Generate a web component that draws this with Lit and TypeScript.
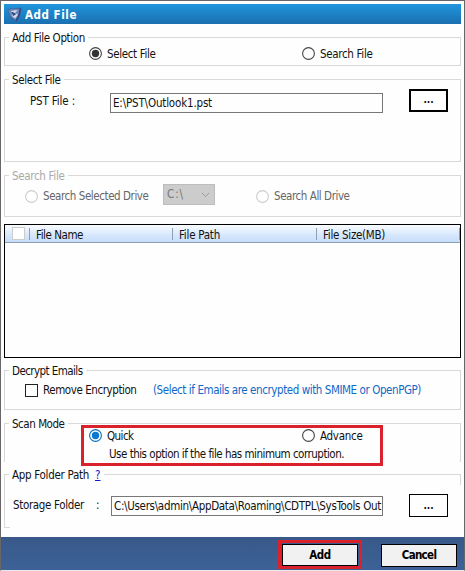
import { LitElement, css, html, svg } from "lit"
import { customElement, property, query } from "lit/decorators.js"
import { classMap } from "lit/directives/class-map.js"

// label that spreads its letters over a given width
@customElement("fit-label")
export class FitLabel extends LitElement {
  @property()
  text = ""

  @property({ type: Number })
  size = 0

  @query("span")
  span!: HTMLSpanElement

  updated() {
    if (!this.size) return
    this.span.style.letterSpacing = "0px"
    const natural = this.span.getBoundingClientRect().width
    this.span.style.letterSpacing = (this.size - natural) / this.text.length + "px"
  }

  render() {
    return html`<span>${this.text}</span>`
  }

  static styles = css`
    :host {
      display: block;
      white-space: pre;
    }
    span {
      display: inline-block;
    }
  `
}

@customElement("radio-item")
export class RadioItem extends LitElement {
  @property()
  label = ""

  @property({ type: Number })
  size = 0

  @property({ type: Boolean })
  checked = false

  @property({ type: Boolean })
  accent = false

  @property({ type: Boolean })
  disabled = false

  render() {
    return html`
      <div class=${classMap({ radio: true, accent: this.accent, disabled: this.disabled })}>
        <svg width="13" height="13" viewBox="0 0 13 13">
          <circle class="ring" cx="6.5" cy="6.5" r="5.9" />
          ${this.checked ? svg`<circle class="dot" cx="6.5" cy="6.5" r="3.7" />` : null}
        </svg>
        <fit-label .text=${this.label} .size=${this.size}></fit-label>
      </div>
    `
  }

  static styles = css`
    :host {
      display: block;
    }
    .radio {
      display: flex;
      align-items: center;
      gap: 5px;
      height: 15px;
    }
    svg {
      display: block;
      flex: none;
    }
    fit-label {
      padding-top: 1px;
    }
    .ring {
      fill: #fff;
      stroke: #444;
      stroke-width: 1.1;
    }
    .dot {
      fill: #333;
    }
    .accent .ring {
      stroke: #0a6cb8;
    }
    .accent .dot {
      fill: #0a78d0;
    }
    .disabled .ring {
      stroke: #ccc;
    }
    .disabled {
      color: #666;
    }
  `
}

@customElement("app-root")
export class AppRoot extends LitElement {
  columns = [
    { name: "File Name", size: 47, cls: "c1" },
    { name: "File Path", size: 41, cls: "c2" },
    { name: "File Size(MB)", size: 62, cls: "c3" },
  ]

  legend(text: string, size: number) {
    return html`<div class="legend"><fit-label .text=${text} .size=${size}></fit-label></div>`
  }

  render() {
    return html`
      <div class="window">
        <div class="title">
          <svg width="16" height="17" viewBox="0 0 16 17">
            <path d="M0.5 3 L7 2 L14.5 1.5 L13.5 9 L9 16.5 L3 12 Z" fill="#3a6aa6" />
            <path d="M1.5 4 L7 3 L12.5 3 L11.5 9 L8.5 14 L3.5 10 Z" fill="#7088ba" />
            <path d="M4 5 L10.5 4 L8 7 L11 8.5 L8 12.5 L4.5 9.5 L7.5 9 Z" fill="#d3dcec" />
            <path d="M5 6.5 L8 8 L6 9.5 M13.5 2.5 L12 9.5 L9 15" fill="none" stroke="#33467a" stroke-width="1.4" />
          </svg>
          <fit-label .text=${"Add File"} .size=${52}></fit-label>
        </div>

        <div class="group option">
          ${this.legend("Add File Option", 73)}
          <div class="radios">
            <radio-item label="Select File" size="48.5" checked></radio-item>
            <radio-item label="Search File" size="52.5"></radio-item>
          </div>
        </div>

        <div class="group select">
          ${this.legend("Select File", 48.5)}
          <div class="row">
            <fit-label class="name" .text=${"PST File :"} .size=${45}></fit-label>
            <div class="input"><fit-label .text=${"E:\\PST\\Outlook1.pst"} .size=${99}></fit-label></div>
            <div class="browse focus"><fit-label .text=${"..."} .size=${10}></fit-label></div>
          </div>
        </div>

        <div class="group search">
          ${this.legend("Search File", 52.5)}
          <div class="row">
            <radio-item label="Search Selected Drive" size="105.5" disabled></radio-item>
            <div class="combo">
              <fit-label .text=${"C:\\"} .size=${17}></fit-label>
              <svg width="9" height="6" viewBox="0 0 9 6">
                <path d="M1 1 L4.5 4.5 L8 1" fill="none" stroke="#999" />
              </svg>
            </div>
            <radio-item label="Search All Drive" size="75.5" disabled></radio-item>
          </div>
        </div>

        <div class="table">
          <div class="head">
            <div class="cell check"><i></i></div>
            ${this.columns.map(
              (c) => html`<div class="cell ${c.cls}"><fit-label .text=${c.name} .size=${c.size}></fit-label></div>`
            )}
          </div>
        </div>

        <div class="group decrypt">
          ${this.legend("Decrypt Emails", 70.5)}
          <div class="row">
            <div class="box"></div>
            <fit-label class="remove" .text=${"Remove Encryption"} .size=${93.5}></fit-label>
            <fit-label class="note" .text=${"(Select if Emails are encrypted with SMIME or OpenPGP)"} .size=${268}></fit-label>
          </div>
        </div>

        <div class="group scan">
          ${this.legend("Scan Mode", 52.5)}
          <div class="mark">
            <div class="modes">
              <radio-item label="Quick" size="26.5" checked accent></radio-item>
              <radio-item label="Advance" size="42.5"></radio-item>
            </div>
            <fit-label class="hint" .text=${"Use this option if the file has minimum corruption."} .size=${235}></fit-label>
          </div>
        </div>

        <div class="group folder">
          <div class="legend">
            <fit-label .text=${"App Folder Path"} .size=${77}></fit-label>
            <span class="help">?</span>
          </div>
          <div class="row">
            <fit-label class="name" .text=${"Storage Folder"} .size=${71}></fit-label>
            <span class="colon">:</span>
            <div class="input"><fit-label .text=${"C:\\Users\\admin\\AppData\\Roaming\\CDTPL\\SysTools Out"} .size=${267}></fit-label></div>
            <div class="browse"><fit-label .text=${"..."} .size=${10}></fit-label></div>
          </div>
        </div>

        <div class="footer">
          <div class="ring"><div class="button"><fit-label .text=${"Add"} .size=${21.5}></fit-label></div></div>
          <div class="button"><fit-label .text=${"Cancel"} .size=${34.5}></fit-label></div>
        </div>
      </div>
    `
  }

  static styles = css`
    :host {
      display: block;
      font: 11.5px/15px "DejaVu Sans Condensed", "DejaVu Sans", Tahoma, sans-serif;
      font-stretch: condensed;
      color: #111;
    }
    * {
      box-sizing: border-box;
    }
    .window {
      width: 465px;
      height: 571px;
      display: flex;
      flex-direction: column;
      background: #fefefe;
      border: 1px solid #6a6668;
      border-bottom-color: #e8e8e8;
      overflow: hidden;
    }
    .title {
      flex: none;
      height: 20px;
      margin: 3px 3px 0;
      padding-left: 3px;
      display: flex;
      align-items: center;
      gap: 2px;
      color: #fff;
      font-weight: bold;
      font-size: 11.5px;
      background: linear-gradient(#2096dd, #1a6fb0);
    }
    .title fit-label {
      padding-top: 2px;
    }
    .group {
      flex: none;
      margin: 0 3px;
      border: 1px solid #d9d9d9;
    }
    .legend {
      display: flex;
      width: fit-content;
      height: 15px;
      margin: -8px 0 0 4px;
      padding: 0 3px;
      background: #fefefe;
    }
    .legend > * {
      padding-top: 1px;
    }
    .row {
      display: flex;
      align-items: center;
    }
    .option {
      height: 29px;
      margin-top: 13px;
    }
    .radios {
      display: grid;
      grid-template-columns: 213px auto;
      padding-left: 84px;
      margin-top: 1px;
    }
    .select {
      height: 83px;
      margin-top: 13px;
    }
    .select .row {
      padding-left: 25px;
    }
    .select .name {
      width: 80px;
      padding-top: 3px;
    }
    .input {
      width: 273px;
      height: 20px;
      padding: 1px 0 0 2px;
      border: 1px solid #777;
      line-height: 17px;
      overflow: hidden;
    }
    .select .input {
      margin-top: 6px;
    }
    .browse {
      display: flex;
      justify-content: center;
      width: 39px;
      height: 23px;
      margin-left: 26px;
      border: 1px solid #000;
      line-height: 20px;
      font-size: 10px;
      font-weight: bold;
    }
    .focus {
      border-width: 2px;
      line-height: 18px;
    }
    .search {
      height: 42px;
      margin-top: 13px;
    }
    .search .legend {
      color: #aaa;
    }
    .search .row {
      padding-left: 20px;
      margin-top: 1px;
    }
    .search radio-item {
      padding-top: 3px;
    }
    .combo {
      display: flex;
      align-items: center;
      justify-content: space-between;
      width: 52px;
      height: 21px;
      margin: 0 41px 0 14.5px;
      padding: 0 4px 0 3px;
      background: #ccc;
      border: 1px solid #bdbdbd;
      color: #777;
    }
    .table {
      flex: none;
      height: 134px;
      margin: 7px 3px 0;
      border: 1px solid #000;
    }
    .head {
      display: flex;
      height: 18px;
      background: linear-gradient(#fafcff, #d9e9fd 55%, #c6ddfa);
      border-bottom: 1px solid #8ba0b5;
    }
    .cell {
      padding: 3px 0 0 6px;
      background: linear-gradient(#8ba0b5, #8ba0b5) no-repeat right 3px / 1px 12px;
    }
    .check {
      width: 25px;
      padding: 2px 0 0 7px;
    }
    .check i {
      display: block;
      width: 13px;
      height: 13px;
      background: #fff;
      border: 1px solid #ccc;
    }
    .c1 {
      width: 143px;
    }
    .c2 {
      width: 144px;
    }
    .c3 {
      flex: 1;
    }
    .decrypt {
      height: 40px;
      margin-top: 12px;
    }
    .decrypt .row {
      height: 15px;
      padding-left: 20px;
      margin-top: 5px;
    }
    .box {
      width: 13px;
      height: 13px;
      border: 1px solid #222;
    }
    .remove {
      width: 115px;
      padding-left: 5px;
    }
    .note {
      color: #1068c8;
    }
    .scan {
      height: 39px;
      margin-top: 13px;
      border-bottom: 0;
    }
    .mark {
      position: relative;
      z-index: 1;
      width: 302px;
      height: 41px;
      margin: -6px 0 0 76px;
      border: 3px solid #d9222c;
    }
    .modes {
      display: grid;
      grid-template-columns: 213px auto;
      padding-left: 5px;
    }
    .hint {
      padding: 4px 0 0 25px;
    }
    .folder {
      height: 54px;
      margin-top: 12px;
      border-bottom: 0;
      border-right: 0;
      background:
        linear-gradient(#d9d9d9, #d9d9d9) no-repeat right top / 1px 10px,
        linear-gradient(#d9d9d9, #d9d9d9) no-repeat left bottom / 5px 1px;
    }
    .help {
      margin-left: 6px;
      color: #1515d0;
      text-decoration: underline;
    }
    .folder .row {
      padding-left: 8px;
      margin-top: 12px;
    }
    .folder .name {
      width: 83px;
    }
    .colon {
      width: 15px;
    }
    .folder .input {
      width: 272px;
    }
    .folder .browse {
      line-height: 22px;
    }
    .footer {
      flex: none;
      display: flex;
      align-items: flex-start;
      height: 33px;
      margin-top: 9px;
      padding: 3px 0 0 277px;
      background: linear-gradient(#395889, #3c6297);
    }
    .ring {
      border: 3px solid #d9222c;
      padding: 1px 1px 0;
      margin-right: 19px;
    }
    .button {
      display: flex;
      align-items: center;
      justify-content: center;
      width: 76px;
      height: 22px;
      border: 1px solid #000;
      background: #f1f1f1;
      color: #000;
      font-size: 11.5px;
      font-weight: bold;
    }
    .footer > .button {
      height: 23px;
      margin-top: 4px;
    }
  `
}
